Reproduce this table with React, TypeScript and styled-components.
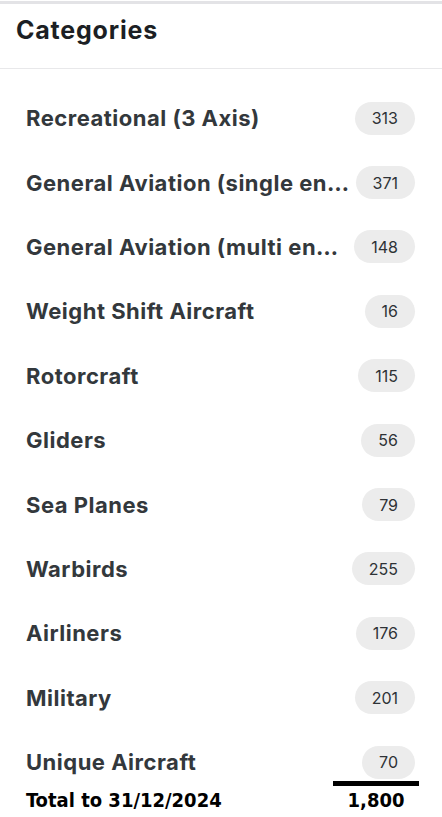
import React from "react";
import styled, { createGlobalStyle } from "styled-components";

const GlobalStyle = createGlobalStyle`
  html, body { margin: 0; padding: 0; background: #ffffff; }
  body { font-family: Inter, "Noto Sans", sans-serif; }
  * { box-sizing: border-box; }
`;

const Panel = styled.div`
  width: 442px;
  height: 817px;
  overflow: hidden;
  background: #ffffff;
  padding-top: 1px;
`;

const Header = styled.header`
  border-top: 3px solid #e3e3e6;
  border-bottom: 1px solid #e8e8ea;
  height: 68px;
  padding: 0 16px;
  display: flex;
  align-items: center;
`;

const Title = styled.h2`
  margin: 0;
  margin-top: -13px;
  font-family: Inter, sans-serif;
  font-weight: 700;
  font-size: 25px;
  letter-spacing: 0.8px;
  color: #1c1f24;
`;

const List = styled.ul`
  list-style: none;
  margin: 0;
  padding: 17px 27px 0 26px;
  display: flex;
  flex-direction: column;
`;

const Row = styled.li`
  height: 64.4px;
  display: flex;
  align-items: center;
  justify-content: space-between;
  gap: 5px;
`;

const Label = styled.span`
  flex: 1 1 auto;
  min-width: 0;
  white-space: nowrap;
  overflow: hidden;
  text-overflow: ellipsis;
  font-family: Inter, sans-serif;
  font-weight: 700;
  font-size: 22px;
  letter-spacing: 0.5px;
  color: #33383c;
`;

const Badge = styled.span`
  flex: 0 0 auto;
  height: 33px;
  padding: 0 17px;
  border-radius: 17px;
  background: #ececec;
  display: inline-flex;
  align-items: center;
  justify-content: center;
  font-family: Inter, sans-serif;
  font-size: 16px;
  font-weight: 400;
  color: #2e3236;
`;

const Footer = styled.div`
  margin-top: -13px;
  padding: 0 23px 0 26px;
  display: flex;
  justify-content: space-between;
  align-items: flex-start;
`;

const TotalLabel = styled.span`
  margin-top: 8px;
  font-family: "DejaVu Sans Condensed", "Liberation Sans Narrow", sans-serif;
  font-weight: 700;
  font-size: 20px;
  line-height: 22px;
  color: #000;
`;

const TotalBox = styled.div`
  width: 86px;
  display: flex;
  flex-direction: column;
  align-items: center;
`;

const Rule = styled.div`
  align-self: stretch;
  height: 5px;
  background: #000;
`;

const TotalValue = styled.span`
  margin-top: 3px;
  font-family: "DejaVu Sans Condensed", "Liberation Sans Narrow", sans-serif;
  font-weight: 700;
  font-size: 20px;
  line-height: 22px;
  color: #000;
`;

const categories: [string, number][] = [
  ["Recreational (3 Axis)", 313],
  ["General Aviation (single engine)", 371],
  ["General Aviation (multi engine)", 148],
  ["Weight Shift Aircraft", 16],
  ["Rotorcraft", 115],
  ["Gliders", 56],
  ["Sea Planes", 79],
  ["Warbirds", 255],
  ["Airliners", 176],
  ["Military", 201],
  ["Unique Aircraft", 70],
];

export default function App() {
  return (
    <>
      <GlobalStyle />
      <Panel>
        <Header>
          <Title>Categories</Title>
        </Header>
        <List>
          {categories.map(([name, count]) => (
            <Row key={name}>
              <Label>{name}</Label>
              <Badge>{count}</Badge>
            </Row>
          ))}
        </List>
        <Footer>
          <TotalLabel>Total to 31/12/2024</TotalLabel>
          <TotalBox>
            <Rule />
            <TotalValue>1,800</TotalValue>
          </TotalBox>
        </Footer>
      </Panel>
    </>
  );
}
